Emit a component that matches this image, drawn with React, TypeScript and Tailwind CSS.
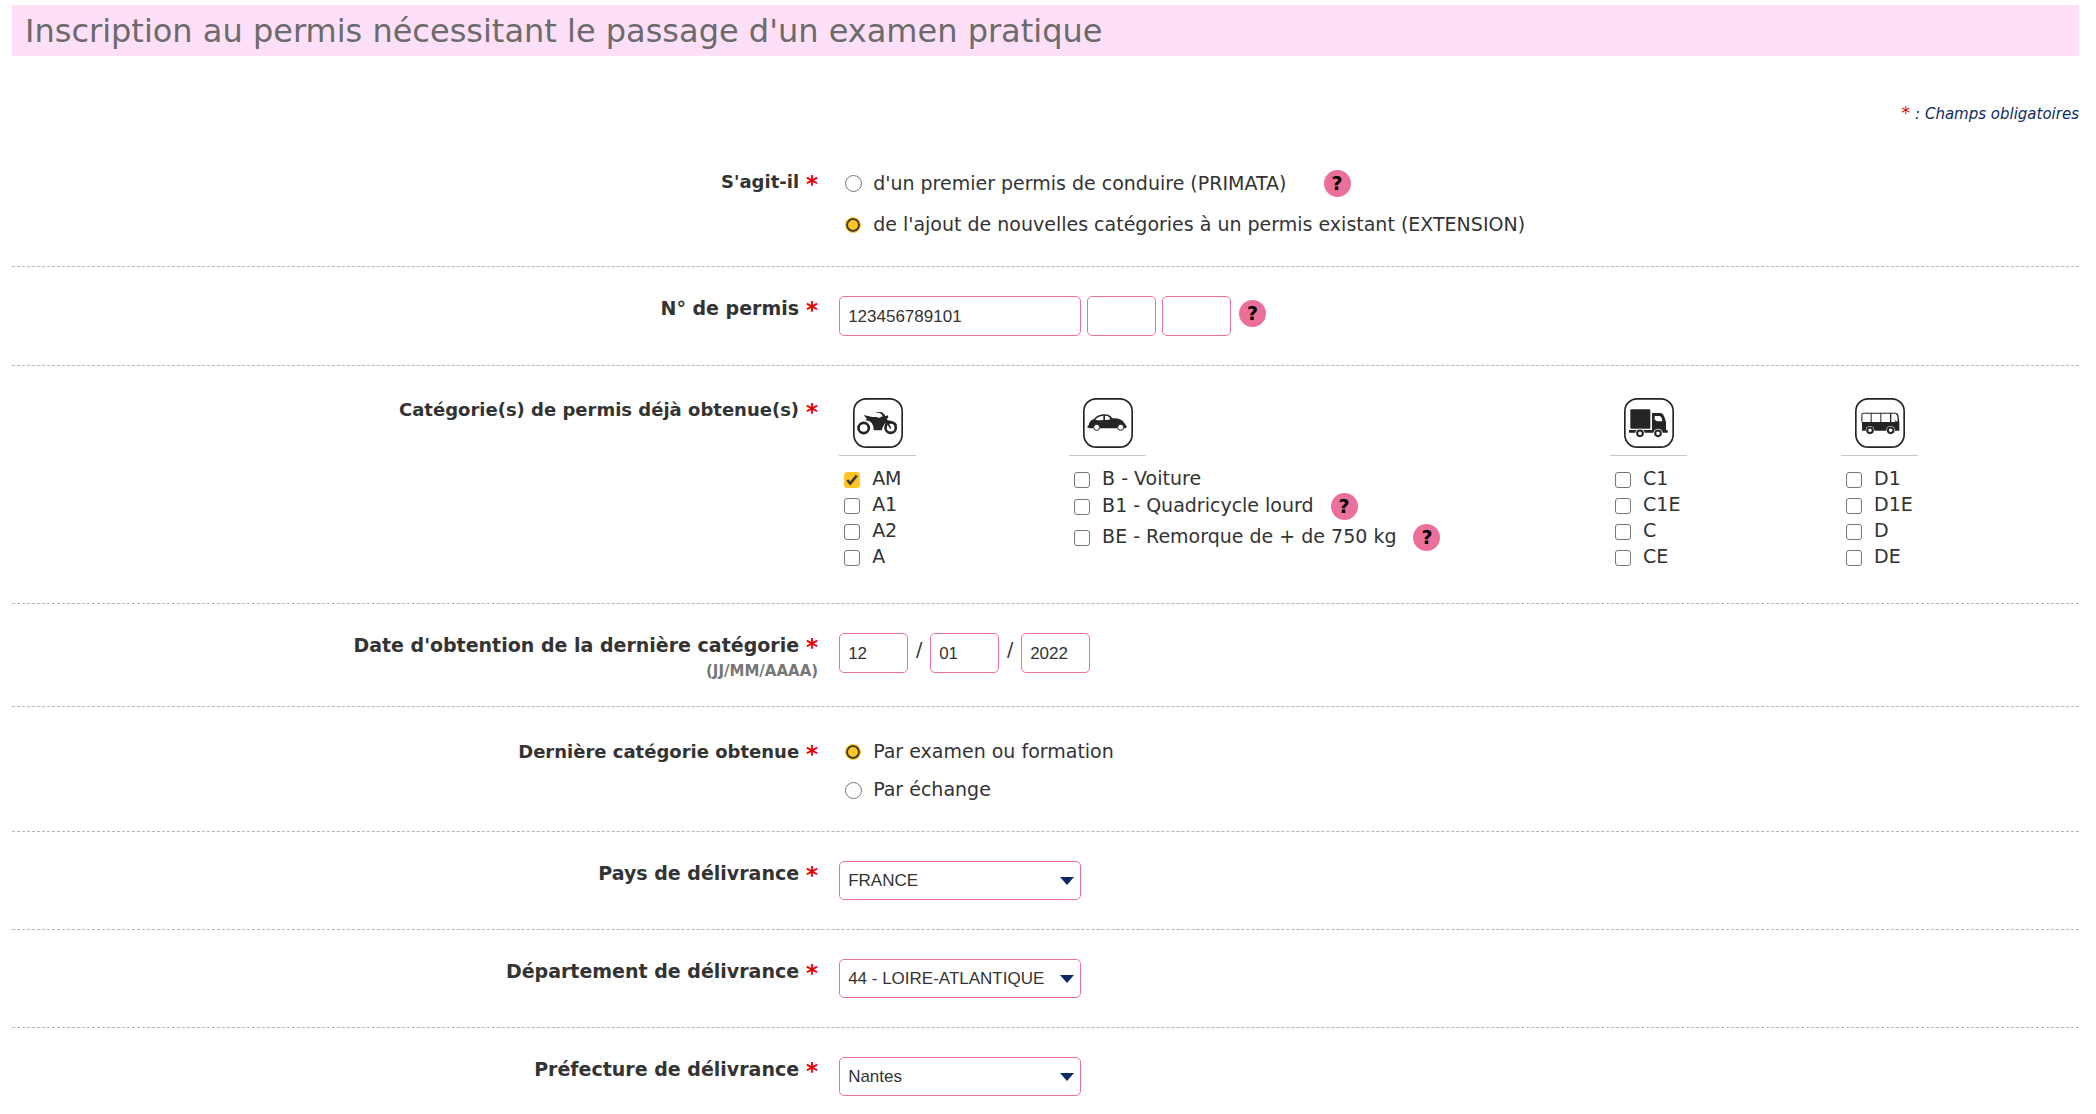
import { useState } from 'react';
import type { ReactNode } from 'react';

const controlClass =
  "border border-[#ee6f9c] rounded-[5px] bg-white px-2 font-['Liberation_Sans',Arial,sans-serif] text-[17px] text-[#333]";

function Help({ className = '' }: { className?: string }) {
  return (
    <button
      type="button"
      aria-label="Aide"
      className={`inline-flex size-[27px] shrink-0 items-center justify-center rounded-full bg-[#ec6f9b] text-[19px] font-bold text-black ${className}`}
    >
      ?
    </button>
  );
}

type RowProps = {
  label: string;
  htmlFor?: string;
  hint?: string;
  labelClass?: string;
  className?: string;
  children: ReactNode;
};

function Row({
  label,
  htmlFor,
  hint,
  labelClass = 'text-[19px]',
  className = 'pt-[29px] pb-[29px] border-b',
  children,
}: RowProps) {
  return (
    <div className={`flex gap-[21px] border-dashed border-[#b5b5b5] ${className}`}>
      <div className="w-[39%] shrink-0 text-right font-bold">
        <label htmlFor={htmlFor} className={`flex justify-end gap-[7px] leading-6 ${labelClass}`}>
          {label} <span className="text-[23px] leading-7 text-[#e60000]">*</span>
        </label>
        {hint && <span className="block text-[15px] leading-5 text-[#777]">{hint}</span>}
      </div>
      <div className="min-w-0 flex-1">{children}</div>
    </div>
  );
}

type RadioProps = {
  name: string;
  label: string;
  checked: boolean;
  onChange: () => void;
};

function Radio({ name, label, checked, onChange }: RadioProps) {
  return (
    <label className="ml-[6px] flex items-center gap-[11px]">
      <input
        type="radio"
        name={name}
        checked={checked}
        onChange={onChange}
        className="m-0 size-[17px] shrink-0 appearance-none rounded-full border border-[#767676] bg-white checked:mr-px checked:size-4 checked:border-[#ffc425] checked:bg-[#ffc425] checked:inset-ring-2 checked:inset-ring-[#3b3b3b]"
      />
      <span className="pb-0.5 leading-[22px]">{label}</span>
    </label>
  );
}

function Category({ label, defaultChecked, help }: { label: string; defaultChecked?: boolean; help?: boolean }) {
  return (
    <div className="flex items-center">
      <label className="ml-[5px] flex items-center gap-3">
        <span className="relative flex size-4">
          <input
            type="checkbox"
            defaultChecked={defaultChecked}
            className="peer m-0 size-4 appearance-none rounded-[3px] border border-[#767676] bg-white checked:border-[#ffc425] checked:bg-[#ffc425]"
          />
          <svg viewBox="0 0 16 16" className="pointer-events-none absolute inset-0 hidden size-4 peer-checked:block">
            <path d="M3.2 8 6.2 11.4 12.8 3.6" fill="none" stroke="#3b3b3b" strokeWidth="2.6" />
          </svg>
        </span>
        <span className="pb-[3px] leading-[23px]">{label}</span>
      </label>
      {help && <Help className="ml-[17px]" />}
    </div>
  );
}

function IconFrame({ children }: { children: ReactNode }) {
  return (
    <svg viewBox="0 0 150 150" className="size-[50px]" fill="#252525" aria-hidden="true">
      <rect x="2.5" y="2.5" width="145" height="145" rx="37" fill="#fff" stroke="#252525" strokeWidth="5" />
      {children}
    </svg>
  );
}

function MotoIcon() {
  return (
    <IconFrame>
      <circle cx="32" cy="90" r="15.5" fill="none" stroke="#252525" strokeWidth="8" />
      <circle cx="113" cy="89" r="15.5" fill="none" stroke="#252525" strokeWidth="8" />
      <path d="M32 51 58 57 72 57Q79 63 86 55L90 58 86 49 79 44 69 45 73 42 86 42 94 49 97 55 104 52 106 58 101 64 105 67 113 68Q129 71 134 83L123 75 107 74 115 90 112 93 101 76 95 77Q89 86 86 97L62 97Q62 80 53 72L46 68 36 67 42 63Z" />
    </IconFrame>
  );
}

function CarIcon() {
  return (
    <IconFrame>
      <path d="M12 87 17 82Q17 69 34 62Q44 50 60 49Q80 47 88 61Q115 59 124 75Q127 80 132 87L127 91H18Z" />
      <path d="M37 65Q44 54 61 53L61 66Q45 68 37 65ZM66 53Q78 52 82 64Q75 67 66 66Z" fill="#fff" />
      <circle cx="41" cy="88" r="9" fill="#fff" stroke="#252525" strokeWidth="3" />
      <circle cx="113" cy="88" r="9" fill="#fff" stroke="#252525" strokeWidth="3" />
    </IconFrame>
  );
}

function TruckIcon() {
  return (
    <IconFrame>
      <rect x="19" y="34" width="60" height="58" rx="3" />
      <path d="M84 45H110Q117 46 121 56L126 72V96H131V104H15V96H84Z" />
      <path d="M92 54H107Q111 55 113 61L115 70H99L92 65Z" fill="#fff" />
      <circle cx="48" cy="106" r="14" fill="#fff" />
      <circle cx="102" cy="106" r="14" fill="#fff" />
      <circle cx="48" cy="106" r="8.5" fill="#fff" stroke="#252525" strokeWidth="6" />
      <circle cx="102" cy="106" r="8.5" fill="#fff" stroke="#252525" strokeWidth="6" />
    </IconFrame>
  );
}

function BusIcon() {
  return (
    <IconFrame>
      <path d="M24 44H123Q130 45 131 56L133 75V98H21V73L19 70V50Q19 45 24 44Z" />
      <path d="M25 47H47V72H22V51Q22 48 25 47ZM50 47H76V72H50ZM79 47H105V72H79ZM109 47H121Q126 48 127 56L129 72H109Z" fill="#fff" />
      <path d="M117 64 127 72V60L129 72H122Z" />
      <circle cx="45" cy="97" r="13" fill="#fff" />
      <circle cx="107" cy="97" r="13" fill="#fff" />
      <circle cx="45" cy="97" r="8.5" fill="#fff" stroke="#252525" strokeWidth="6" />
      <circle cx="107" cy="97" r="8.5" fill="#fff" stroke="#252525" strokeWidth="6" />
    </IconFrame>
  );
}

function CategoryGroup({ icon, children }: { icon: ReactNode; children: ReactNode }) {
  return (
    <div>
      <div className="mb-[11px] flex h-[58px] w-[77px] justify-center border-b border-[#c8c8c8]">{icon}</div>
      {children}
    </div>
  );
}

function Select({ id, options }: { id: string; options: string[] }) {
  return (
    <div className="relative w-[242px]">
      <select id={id} className={`${controlClass} block h-[39px] w-full appearance-none`}>
        {options.map((option) => (
          <option key={option}>{option}</option>
        ))}
      </select>
      <svg viewBox="0 0 14 8" className="pointer-events-none absolute top-4 right-[7px] h-2 w-[14px]">
        <path d="M0 0H14L7 8Z" fill="#0d2b63" />
      </svg>
    </div>
  );
}

export default function App() {
  const [requestType, setRequestType] = useState('extension');
  const [obtainedBy, setObtainedBy] = useState('examen');

  return (
    <main className="bg-white pt-[5px] pr-[17px] pl-3 font-['DejaVu_Sans',Verdana,sans-serif] text-[19px] text-[#333]">
      <h1 className="bg-[#fde0f8] px-[13px] pt-0.5 text-[32px] leading-[49px] text-[#6b6b6b]">
        Inscription au permis nécessitant le passage d'un examen pratique
      </h1>
      <p className="mt-[47px] text-right text-[15px] leading-5 text-[#0d2b63] italic">
        <span className="text-lg leading-5 text-[#e60000]">*</span> : Champs obligatoires
      </p>

      <form>
        <Row label="S'agit-il" labelClass="text-lg" className="border-b pt-[46px] pb-[29px]">
          <div className="flex h-[27px] items-center gap-[37px]">
            <Radio
              name="demande"
              label="d'un premier permis de conduire (PRIMATA)"
              checked={requestType === 'primata'}
              onChange={() => setRequestType('primata')}
            />
            <Help />
          </div>
          <div className="mt-4">
            <Radio
              name="demande"
              label="de l'ajout de nouvelles catégories à un permis existant (EXTENSION)"
              checked={requestType === 'extension'}
              onChange={() => setRequestType('extension')}
            />
          </div>
        </Row>

        <Row label="N° de permis" htmlFor="permis">
          <div className="flex gap-[6px]">
            <input id="permis" defaultValue="123456789101" className={`${controlClass} h-10 w-[242px] pt-0.5`} />
            <input aria-label="N° de permis, partie 2" className={`${controlClass} h-10 w-[69px] pt-0.5`} />
            <input aria-label="N° de permis, partie 3" className={`${controlClass} h-10 w-[69px] pt-0.5`} />
            <Help className="mt-1 ml-0.5" />
          </div>
        </Row>

        <Row label="Catégorie(s) de permis déjà obtenue(s)" labelClass="text-lg" className="border-b pt-8 pb-8">
          <div className="grid grid-cols-[230fr_541fr_231fr_238fr]">
            <CategoryGroup icon={<MotoIcon />}>
              <Category label="AM" defaultChecked />
              <Category label="A1" />
              <Category label="A2" />
              <Category label="A" />
            </CategoryGroup>
            <CategoryGroup icon={<CarIcon />}>
              <Category label="B - Voiture" />
              <Category label="B1 - Quadricycle lourd" help />
              <div className="mt-1">
                <Category label="BE - Remorque de + de 750 kg" help />
              </div>
            </CategoryGroup>
            <CategoryGroup icon={<TruckIcon />}>
              <Category label="C1" />
              <Category label="C1E" />
              <Category label="C" />
              <Category label="CE" />
            </CategoryGroup>
            <CategoryGroup icon={<BusIcon />}>
              <Category label="D1" />
              <Category label="D1E" />
              <Category label="D" />
              <Category label="DE" />
            </CategoryGroup>
          </div>
        </Row>

        <Row
          label="Date d'obtention de la dernière catégorie"
          htmlFor="jour"
          hint="(JJ/MM/AAAA)"
          className="border-b pt-[29px] pb-[25px]"
        >
          <div className="flex">
            <input id="jour" defaultValue="12" className={`${controlClass} h-10 w-[69px] pt-0.5`} />
            <span className="w-[22px] text-center leading-8">/</span>
            <input aria-label="Mois" defaultValue="01" className={`${controlClass} h-10 w-[69px] pt-0.5`} />
            <span className="w-[22px] text-center leading-8">/</span>
            <input aria-label="Année" defaultValue="2022" className={`${controlClass} h-10 w-[69px] pt-0.5`} />
          </div>
        </Row>

        <Row label="Dernière catégorie obtenue" labelClass="text-lg" className="border-b pt-[33px] pb-[29px]">
          <div className="flex flex-col gap-[14px]">
            <Radio
              name="obtention"
              label="Par examen ou formation"
              checked={obtainedBy === 'examen'}
              onChange={() => setObtainedBy('examen')}
            />
            <Radio
              name="obtention"
              label="Par échange"
              checked={obtainedBy === 'echange'}
              onChange={() => setObtainedBy('echange')}
            />
          </div>
        </Row>

        <Row label="Pays de délivrance" htmlFor="pays">
          <Select id="pays" options={['FRANCE']} />
        </Row>
        <Row label="Département de délivrance" htmlFor="departement">
          <Select id="departement" options={['44 - LOIRE-ATLANTIQUE']} />
        </Row>
        <Row label="Préfecture de délivrance" htmlFor="prefecture" className="pt-[29px] pb-[18px]">
          <Select id="prefecture" options={['Nantes']} />
        </Row>
      </form>
    </main>
  );
}
